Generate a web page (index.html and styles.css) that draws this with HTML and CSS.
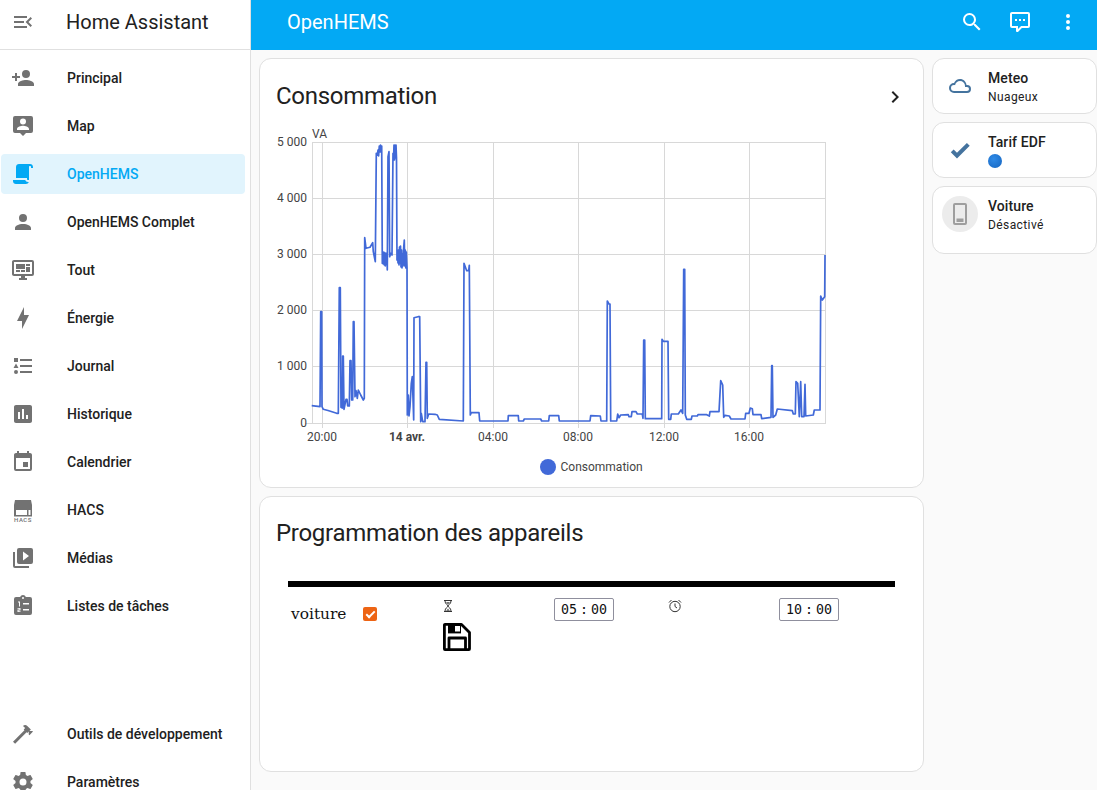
FILE: index.html
```html
<!DOCTYPE html>
<html lang="fr">
<head>
<meta charset="utf-8">
<title>OpenHEMS</title>
<link rel="stylesheet" href="styles.css">
</head>
<body>
<div class="app">
  <aside class="sidebar">
    <div class="side-head">
      <svg class="icon" viewBox="0 0 24 24"><path d="M21,15.61L19.59,17L14.58,12L19.59,7L21,8.39L17.44,12L21,15.61M3,6H16V8H3V6M3,13V11H13V13H3M3,18V16H16V18H3Z"/></svg>
      <span class="side-title">Home Assistant</span>
    </div>
    <nav class="nav">
      <a class="item"><svg class="icon" viewBox="0 0 24 24"><path d="M15,14C12.33,14 7,15.33 7,18V20H23V18C23,15.33 17.67,14 15,14M6,10V7H4V10H1V12H4V15H6V12H9V10M15,12A4,4 0 0,0 19,8A4,4 0 0,0 15,4A4,4 0 0,0 11,8A4,4 0 0,0 15,12Z"/></svg><span>Principal</span></a>
      <a class="item"><svg class="icon" viewBox="0 0 24 24"><path fill-rule="evenodd" d="M4 2h16a2 2 0 0 1 2 2v13a2 2 0 0 1-2 2h-5l-3 3-3-3H4a2 2 0 0 1-2-2V4a2 2 0 0 1 2-2zM12 4.500a3 3 0 1 0 0 6 3 3 0 0 0 0-6zM6 15v1h12v-1c0-2-4-3.200-6-3.200s-6 1.200-6 3.200z"/></svg><span>Map</span></a>
      <a class="item active"><svg class="icon" viewBox="0 0 24 24"><path d="M17.8,20C17.4,21.2 16.3,22 15,22H5C3.3,22 2,20.7 2,19V18H5L14.2,18C14.6,19.2 15.7,20 17,20H17.8M19,2C20.7,2 22,3.3 22,5V6H20V5C20,4.4 19.6,4 19,4C18.4,4 18,4.4 18,5V18H17C16.4,18 16,17.6 16,17V16H5V5C5,3.3 6.3,2 8,2H19Z"/></svg><span>OpenHEMS</span></a>
      <a class="item"><svg class="icon" viewBox="0 0 24 24"><path d="M12,4A4,4 0 0,1 16,8A4,4 0 0,1 12,12A4,4 0 0,1 8,8A4,4 0 0,1 12,4M12,14C16.42,14 20,15.79 20,18V20H4V18C4,15.79 7.58,14 12,14Z"/></svg><span>OpenHEMS Complet</span></a>
      <a class="item"><svg class="icon" viewBox="0 0 24 24"><path d="M21,16V4H3V16H21M21,2A2,2 0 0,1 23,4V16A2,2 0 0,1 21,18H14V20H16V22H8V20H10V18H3C1.89,18 1,17.1 1,16V4C1,2.89 1.89,2 3,2H21M5,6H14V11H5V6M15,6H19V8H15V6M19,9V14H15V9H19M5,12H9V14H5V12M10,12H14V14H10V12Z"/></svg><span>Tout</span></a>
      <a class="item"><svg class="icon" viewBox="0 0 24 24"><path d="M11,15H6L13,1V9H18L11,23V15Z"/></svg><span>Énergie</span></a>
      <a class="item"><svg class="icon" viewBox="0 0 24 24"><path d="M5,9.5L7.5,14H2.5L5,9.5M3,4H7V8H3V4M5,20A2,2 0 0,0 7,18A2,2 0 0,0 5,16A2,2 0 0,0 3,18A2,2 0 0,0 5,20M9,5V7H21V5H9M9,19H21V17H9V19M9,13H21V11H9V13Z"/></svg><span>Journal</span></a>
      <a class="item"><svg class="icon" viewBox="0 0 24 24"><path d="M9 17H7V10H9V17M13 17H11V7H13V17M17 17H15V13H17V17M19 3H5C3.9 3 3 3.9 3 5V19C3 20.1 3.9 21 5 21H19C20.1 21 21 20.1 21 19V5C21 3.9 20.1 3 19 3Z"/></svg><span>Historique</span></a>
      <a class="item"><svg class="icon" viewBox="0 0 24 24"><path d="M19,19H5V8H19M16,1V3H8V1H6V3H5C3.89,3 3,3.89 3,5V19A2,2 0 0,0 5,21H19A2,2 0 0,0 21,19V5C21,3.89 20.1,3 19,3H18V1M17,12H12V17H17V12Z"/></svg><span>Calendrier</span></a>
      <a class="item"><svg class="icon" viewBox="0 0 24 24"><path fill-rule="evenodd" d="M4 2h16l1 5v5H3V7zM3 12h18v6.500H3zM5 12v5h11v-5zM17.500 12v5h2v-5z"/><text class="hacs-text" x="12" y="24">HACS</text></svg><span>HACS</span></a>
      <a class="item"><svg class="icon" viewBox="0 0 24 24"><path d="M4,6H2V20A2,2 0 0,0 4,22H18V20H4V6M20,2H8A2,2 0 0,0 6,4V16A2,2 0 0,0 8,18H20A2,2 0 0,0 22,16V4A2,2 0 0,0 20,2M12,14.5V5.5L18,10L12,14.5Z"/></svg><span>Médias</span></a>
      <a class="item"><svg class="icon" viewBox="0 0 24 24"><path fill-rule="evenodd" d="M19,3H14.820C14.400,1.840 13.300,1 12,1C10.700,1 9.600,1.840 9.180,3H5A2,2 0 0,0 3,5V19A2,2 0 0,0 5,21H19A2,2 0 0,0 21,19V5A2,2 0 0,0 19,3M12,3A1,1 0 0,1 12,5A1,1 0 0,1 12,3ZM12 9h6v1.500h-6zM12 15h6v1.500h-6zM7 7.500h2v5H8v-4H7zM6.500 14h3v2.500h-2v.7h2v.8h-3v-2.500h2v-.7h-2z"/></svg><span>Listes de tâches</span></a>
      <div class="nav-bottom">
        <a class="item"><svg class="icon" viewBox="0 0 24 24"><path d="M2 19.63L13.43 8.2L12.72 7.5L14.14 6.07L12 3.89C13.2 2.7 15.09 2.7 16.27 3.89L19.87 7.5L18.45 8.91H21.29L22 9.62L18.45 13.21L17.74 12.5V9.62L16.27 11.04L15.56 10.33L4.13 21.76L2 19.63Z"/></svg><span>Outils de développement</span></a>
        <a class="item"><svg class="icon" viewBox="0 0 24 24"><path d="M12,15.5A3.5,3.5 0 0,1 8.5,12A3.5,3.5 0 0,1 12,8.5A3.5,3.5 0 0,1 15.5,12A3.5,3.5 0 0,1 12,15.5M19.43,12.97C19.47,12.65 19.5,12.33 19.5,12C19.5,11.67 19.47,11.34 19.43,11L21.54,9.37C21.73,9.22 21.78,8.95 21.66,8.73L19.66,5.27C19.54,5.05 19.27,4.96 19.05,5.05L16.56,6.05C16.04,5.66 15.5,5.32 14.87,5.07L14.5,2.42C14.46,2.18 14.25,2 14,2H10C9.75,2 9.54,2.18 9.5,2.42L9.13,5.07C8.5,5.32 7.96,5.66 7.44,6.05L4.95,5.05C4.73,4.96 4.46,5.05 4.34,5.27L2.34,8.73C2.21,8.95 2.27,9.22 2.46,9.37L4.57,11C4.53,11.34 4.5,11.67 4.5,12C4.5,12.33 4.53,12.65 4.57,12.97L2.46,14.63C2.27,14.78 2.21,15.05 2.34,15.27L4.34,18.73C4.46,18.95 4.73,19.03 4.95,18.95L7.44,17.94C7.96,18.34 8.5,18.68 9.13,18.93L9.5,21.58C9.54,21.82 9.75,22 10,22H14C14.25,22 14.46,21.82 14.5,21.58L14.87,18.93C15.5,18.67 16.04,18.34 16.56,17.94L19.05,18.95C19.27,19.03 19.54,18.95 19.66,18.73L21.66,15.27C21.78,15.05 21.73,14.78 21.54,14.63L19.43,12.97Z"/></svg><span>Paramètres</span></a>
      </div>
    </nav>
  </aside>
  <div class="page">
    <header class="topbar">
      <span class="top-title">OpenHEMS</span>
      <div class="top-actions">
        <svg class="icon" viewBox="0 0 24 24"><path d="M9.5,3A6.5,6.5 0 0,1 16,9.5C16,11.11 15.41,12.59 14.44,13.73L14.71,14H15.5L20.5,19L19,20.5L14,15.5V14.71L13.73,14.44C12.59,15.41 11.11,16 9.5,16A6.5,6.5 0 0,1 3,9.5A6.5,6.5 0 0,1 9.5,3M9.5,5C7,5 5,7 5,9.5C5,12 7,14 9.5,14C12,14 14,12 14,9.5C14,7 12,5 9.5,5Z"/></svg>
        <svg class="icon" viewBox="0 0 24 24"><path d="M9,22A1,1 0 0,1 8,21V18H4A2,2 0 0,1 2,16V4C2,2.89 2.9,2 4,2H20A2,2 0 0,1 22,4V16A2,2 0 0,1 20,18H13.9L10.2,21.71C10,21.9 9.75,22 9.5,22V22H9M10,16V19.08L13.08,16H20V4H4V16H10M17,11H15V9H17V11M13,11H11V9H13V11M9,11H7V9H9V11Z"/></svg>
        <svg class="icon" viewBox="0 0 24 24"><path d="M12,16A2,2 0 0,1 14,18A2,2 0 0,1 12,20A2,2 0 0,1 10,18A2,2 0 0,1 12,16M12,10A2,2 0 0,1 14,12A2,2 0 0,1 12,14A2,2 0 0,1 10,12A2,2 0 0,1 12,10M12,4A2,2 0 0,1 14,6A2,2 0 0,1 12,8A2,2 0 0,1 10,6A2,2 0 0,1 12,4Z"/></svg>
      </div>
    </header>
    <main class="content">
      <div class="col-main">
        <section class="card card-chart">
          <div class="card-head">
            <h2 class="card-title">Consommation</h2>
            <svg class="icon chevron" viewBox="0 0 24 24"><path d="M8.59,16.58L13.17,12L8.59,7.41L10,6L16,12L10,18L8.59,16.58Z"/></svg>
          </div>
          <svg class="chart" viewBox="260 126 663 352" width="663" height="352">
            <g class="grid">
              <path d="M312 142.500H826M312 198.500H826M312 254.500H826M312 310.500H826M312 366.500H826M305 423.500H826"/>
              <path d="M312.500 142V423M322.500 142V428M407.500 142V428M493.500 142V428M578.500 142V428M664.500 142V428M749.500 142V428M825.500 142V423"/>
            </g>
            <text class="axis" x="312" y="138">VA</text>
            <g class="axis end">
              <text x="307" y="146">5 000</text>
              <text x="307" y="202">4 000</text>
              <text x="307" y="258">3 000</text>
              <text x="307" y="314">2 000</text>
              <text x="307" y="370">1 000</text>
              <text x="307" y="427">0</text>
            </g>
            <g class="axis mid">
              <text x="322" y="441">20:00</text>
              <text class="bold" x="407" y="441">14 avr.</text>
              <text x="493" y="441">04:00</text>
              <text x="578" y="441">08:00</text>
              <text x="664" y="441">12:00</text>
              <text x="749" y="441">16:00</text>
            </g>
            <polyline class="trace" points="311.700,405.700 320,406.700 320.700,311.700 321.700,311.700 322,406.700 323.300,409.300 328,410.500 336.700,413.300 338.300,413.300 339.300,287.700 340.300,287.700 341,407.300 342.300,408 342.700,356 343.300,356 344,409.300 346,399.300 347,399.300 347.700,406 349.300,406 350,360.700 351,360.700 351.700,400 352.700,400 353.300,321.700 354,321.700 355,396.700 356,390.700 357.300,398.300 358.300,390 360.700,395 363.300,400 364.300,398.300 364.700,237.700 366,248.300 370,247.300 372.700,242.700 373.300,251.700 375.300,261.700 376.300,153.300 377.300,155 378,150 378.600,156 379.300,146 380,152 380.500,145 381,152 381.700,146 382.300,263.300 382.800,253 383.300,264 383.800,252 384.300,265 384.800,253 385.300,266 385.800,253 386.300,264 386.800,256 387.300,270 388,156.700 389,151.700 389.700,256.700 390.700,253.300 392,255 393,153.300 393.500,160 394,145 394.500,160 395,145 395.500,158 396,145 396.500,158 397,260 397.500,250 398,263 398.500,250 399,265 399.500,247 400,263 400.500,246 401,267 401.500,250 402,268 402.500,254 403,266 403.500,250 404.300,240 404.800,266 405.300,250 405.800,268 406.300,252 407,268 407.300,415 408.300,395 409,416 410,406.700 411.300,383.300 412.300,376.700 413.700,420 414,317.700 418,316.700 419.700,316.700 420.700,421.700 421.300,413.300 422.700,421.700 425,421.700 426,362.300 426.700,362.300 427.300,418.300 428.700,414 435,414.300 437.300,415 439.300,419.300 463.300,421 464,263.300 466.700,270.700 468.700,270.700 469.300,265.300 470.300,415 471.300,412.700 479,412.700 479.700,421 508,421 508.300,415.700 518.300,415.700 518.700,421 523.300,421 524.300,419 540.700,419 541.700,421 548.700,421 549.300,415.700 558.700,415.700 559.300,421 590,421 590.700,415.700 600.300,416 601,421 606.700,421 607.300,301 609,304 610,304 610.700,421 616.700,421 617.700,414 619,417.700 620.700,415 628.300,414.700 629,416.700 631.300,416.700 632,411.700 636,411.700 637.300,414 642.300,414 643,418.300 643.700,340 644.700,340 645.300,418.700 661.700,418.700 662,339.300 663.300,341.300 668,341.300 668.700,419.300 670.700,419.300 671.300,414 678.300,414 681,410 682.700,413.300 683.700,269.300 684.700,269.300 685.300,415 686.700,419.300 691.300,419.300 692,416 697.300,416 698,414.700 706.700,414.700 709.300,416 710,411.700 719,411.700 720.700,380.700 722.700,385 723.700,417.300 725,415.300 729.300,416 731,419 745,419 745.700,413.300 749,413.300 750.300,408 752.300,408.700 753,414.700 761,414.700 761.700,418.700 771,417.300 771.700,365.700 772.300,365.700 773,417.300 775.700,415 777.300,409 792.300,410.700 793.300,414 795.300,414 796,381.700 797.700,383.300 799.300,416.700 800.700,381.700 801.700,416.700 804,416.700 805,384.300 805.700,416 813.300,415 814.300,410 820,410 820.700,296 822.300,300 824.700,296.700 825,255"/>
            <circle class="legend-dot" cx="548" cy="467" r="8"/>
            <text class="axis" x="560.500" y="471">Consommation</text>
          </svg>
        </section>
        <section class="card card-prog">
          <h2 class="card-title">Programmation des appareils</h2>
          <div class="rule"></div>
          <div class="sched">
            <span class="device">voiture</span>
            <input class="check" type="checkbox" checked>
            <div class="dur">
              <svg class="mini" viewBox="0 0 14 14"><path d="M1 1.500h8M1 12.500h8M2 2c0 3 3 4 3 5s-3 2-3 5M8 2c0 3-3 4-3 5s3 2 3 5"/><path class="sand" d="M3 3h4l-2 3zM3 12l2-2.500 2 2.500z"/></svg>
              <svg class="save" viewBox="0 0 28 28"><path class="save-line" d="M2 1.400h16.500l8 8V26a.6.6 0 0 1-.6.6H2a.6.6 0 0 1-.6-.6V2a.6.6 0 0 1 .6-.6zM6 26.600V15h16.500v11.600"/><path d="M5 1.400h13v9H5z"/><path class="save-hole" d="M12 3h5v5.500h-5z"/></svg>
            </div>
            <div class="time"><span>05</span><span>:</span><span>00</span></div>
            <svg class="mini" viewBox="0 0 14 14"><circle cx="7" cy="7.500" r="5.200"/><path d="M7 4.500v3l2 1.500M1 3.500l2.500-2.500M13 3.500l-2.500-2.500"/></svg>
            <div class="time"><span>10</span><span>:</span><span>00</span></div>
          </div>
        </section>
      </div>
      <div class="col-side">
        <div class="tile">
          <div class="tile-icon"><svg class="icon" viewBox="0 0 24 24"><path d="M6,19A5,5 0 0,1 1,14A5,5 0 0,1 6,9C7,6.65 9.3,5 12,5C15.43,5 18.24,7.66 18.5,11.03L19,11A4,4 0 0,1 23,15A4,4 0 0,1 19,19H6M19,13H17V12A5,5 0 0,0 12,7C9.5,7 7.45,8.82 7.06,11.19C6.73,11.07 6.37,11 6,11A3,3 0 0,0 3,14A3,3 0 0,0 6,17H19A2,2 0 0,0 21,15A2,2 0 0,0 19,13Z"/></svg></div>
          <div class="tile-info"><div class="tile-name">Meteo</div><div class="tile-state">Nuageux</div></div>
        </div>
        <div class="tile">
          <div class="tile-icon"><svg class="icon" viewBox="0 0 24 24"><path d="M9,20.42L2.79,14.21L5.62,11.38L9,14.77L18.88,4.88L21.71,7.71L9,20.42Z"/></svg></div>
          <div class="tile-info"><div class="tile-name">Tarif EDF</div><div class="tile-state"><span class="dot"></span></div></div>
        </div>
        <div class="tile tile-tall">
          <div class="tile-icon off"><svg class="icon" viewBox="0 0 24 24"><path fill-rule="evenodd" d="M7 1h10a2 2 0 0 1 2 2v18a2 2 0 0 1-2 2H7a2 2 0 0 1-2-2V3a2 2 0 0 1 2-2zM7 3v18h10V3zM8.500 16.500h7V20h-7z"/></svg></div>
          <div class="tile-info"><div class="tile-name">Voiture</div><div class="tile-state">Désactivé</div></div>
        </div>
      </div>
    </main>
  </div>
</div>
</body>
</html>
```
FILE: styles.css
```css
* { box-sizing: border-box; }
html, body { margin: 0; height: 100%; overflow: hidden; }
body { font-family: Roboto, "Liberation Sans", sans-serif; color: #212121; background: #fafafa; }
.app { display: flex; height: 790px; overflow: hidden; }

.icon { width: 24px; height: 24px; flex: none; fill: currentColor; display: block; }

.sidebar { width: 251px; flex: none; height: 818px; background: #fff; border-right: 1px solid #e0e0e0; display: flex; flex-direction: column; }
.side-head { height: 50px; flex: none; display: flex; align-items: center; gap: 31px; padding: 0 0 6px 11px; border-bottom: 1px solid #e0e0e0; color: #727272; }
.side-title { font-size: 20px; color: #212121; }
.nav { flex: 1; display: flex; flex-direction: column; padding-top: 8px; }
.nav-bottom { margin-top: auto; padding-bottom: 8px; }
.item { display: flex; align-items: center; gap: 32px; width: 244px; height: 40px; margin: 0 0 8px 1px; padding-left: 10px; border-radius: 4px; font-size: 14px; font-weight: 500; color: #212121; }
.item .icon { color: #727272; }
.item.active { background: #e1f4fd; color: #03a9f4; }
.item.active .icon { color: #03a9f4; }
.hacs-text { font-family: Roboto, sans-serif; font-size: 6px; font-weight: 500; letter-spacing: 0.5px; text-anchor: middle; }

.page { flex: 1; min-width: 0; display: flex; flex-direction: column; }
.topbar { height: 50px; flex: none; background: #03a9f4; color: #fff; display: flex; align-items: center; justify-content: space-between; padding: 0 17px 6px 36px; }
.top-title { font-size: 20px; }
.top-actions { display: flex; gap: 24px; }

.content { flex: 1; display: flex; gap: 8px; padding: 8px 0 0 8px; }
.col-main { width: 665px; flex: none; display: flex; flex-direction: column; gap: 8px; }
.col-side { width: 165px; flex: none; display: flex; flex-direction: column; gap: 8px; }

.card { background: #fff; border: 1px solid #e0e0e0; border-radius: 12px; }
.card-chart { height: 430px; display: flex; flex-direction: column; }
.card-prog { height: 276px; padding: 22px 16px 0 16px; }
.card-head { display: flex; align-items: center; justify-content: space-between; padding: 6px 16px 0 16px; height: 67px; flex: none; }
.card-title { margin: 0; font-size: 24px; font-weight: 400; line-height: 28px; letter-spacing: -0.288px; color: #212121; }
.chevron { color: #212121; margin-top: 2px; }

.chart { display: block; flex: none; }
.grid path { fill: none; stroke: #d8d8d8; stroke-width: 1; }
.axis { font-size: 12px; fill: #444; font-family: Roboto, sans-serif; }
.end text { text-anchor: end; }
.mid text { text-anchor: middle; }
.bold { font-weight: 700; }
.trace { fill: none; stroke: #4169d8; stroke-width: 1.7; stroke-linejoin: round; }
.legend-dot { fill: #4169d8; }

.rule { height: 6px; background: #000; margin: 34px 12px 0 12px; }
.sched { display: grid; grid-template-columns: 75px 80px 111px 114px 111px 60px; margin: 11px 0 0 12px; align-items: start; }
.device { font-family: "DejaVu Serif", serif; font-size: 15.400px; line-height: 22px; padding: 5px 0 0 3px; color: #111; }
.check { appearance: none; width: 14px; height: 14px; margin: 9px 0 0 0; border-radius: 2px; background: #ed6414; position: relative; }
.check::after { content: ""; position: absolute; left: 4.500px; top: 1.500px; width: 3px; height: 7px; border: solid #fff; border-width: 0 2px 2px 0; transform: rotate(45deg); }
.dur { display: flex; flex-direction: column; }
.mini { width: 14px; height: 14px; margin-top: 1px; fill: none; stroke: #333; stroke-width: 1; }
.sand { fill: #777; stroke: none; }
.save { width: 28px; height: 28px; margin-top: 10px; }
.save-line { fill: none; stroke: #000; stroke-width: 2.800; stroke-linejoin: round; }
.save-hole { fill: #fff; }
.time { width: 60px; height: 23px; border: 1px solid #8f8f9d; border-radius: 2px; display: flex; align-items: center; justify-content: center; gap: 3px; font-family: "DejaVu Sans Mono", monospace; font-size: 13.300px; color: #111; }

.tile { height: 56px; background: #fff; border: 1px solid #e0e0e0; border-radius: 12px; display: flex; gap: 10px; padding: 9px; }
.tile-tall { height: 68px; }
.tile-icon { width: 36px; height: 36px; border-radius: 50%; flex: none; display: flex; align-items: center; justify-content: center; color: #44739e; }
.tile-icon.off { background: #ececec; color: #9e9e9e; }
.tile-info { display: flex; flex-direction: column; gap: 1px; }
.tile-name { font-size: 14px; font-weight: 500; line-height: 20px; letter-spacing: 0.1px; color: #212121; }
.tile-state { font-size: 12px; line-height: 16px; letter-spacing: 0.4px; color: #212121; display: flex; }
.dot { width: 14px; height: 14px; margin-top: 1px; border-radius: 50%; background: radial-gradient(circle at 40% 35%, #2f8ae6, #1565c0); }
```
